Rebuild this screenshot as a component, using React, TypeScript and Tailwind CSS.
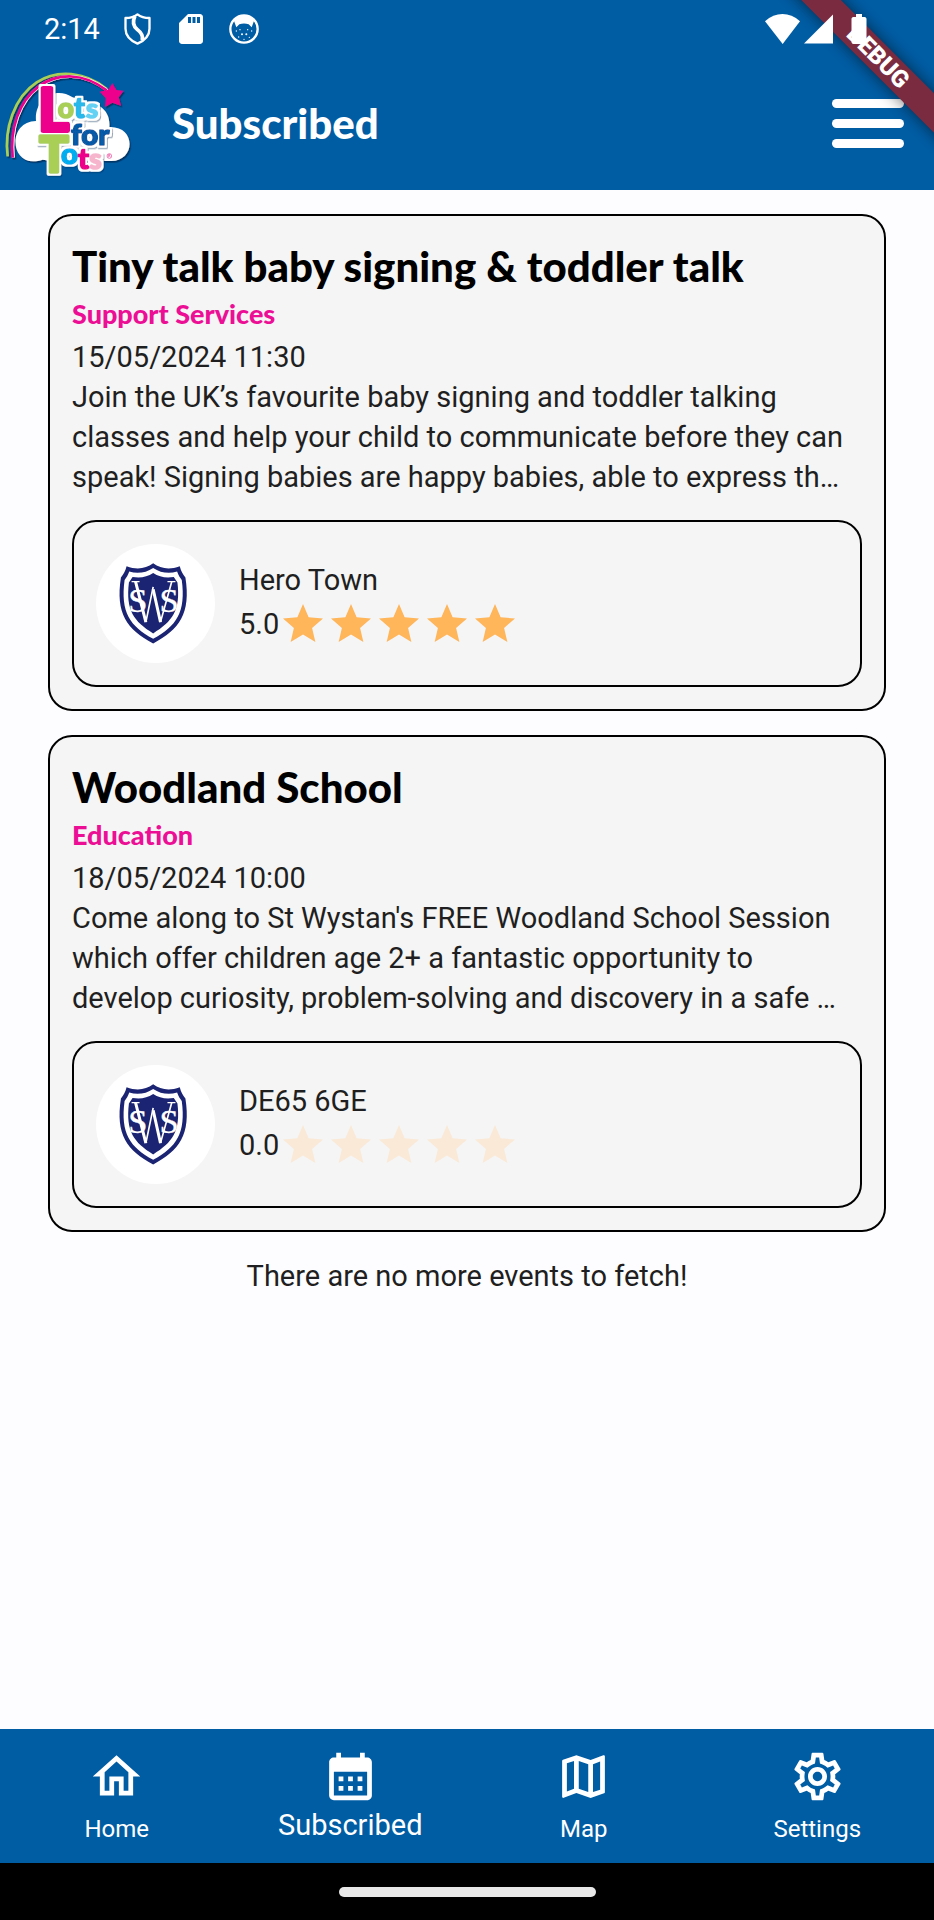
import type { ReactElement } from "react";
import {
  MdBatteryFull,
  MdCalendarMonth,
  MdOutlineHome,
  MdOutlineMap,
  MdOutlineSettings,
  MdSdCard,
  MdStar,
} from "react-icons/md";

type EventItem = {
  title: string;
  category: string;
  date: string;
  description: string;
  place: string;
  rating: number;
};

const events: EventItem[] = [
  {
    title: "Tiny talk baby signing & toddler talk",
    category: "Support Services",
    date: "15/05/2024 11:30",
    description:
      "Join the UK’s favourite baby signing and toddler talking classes and help your child to communicate before they can speak! Signing babies are happy babies, able to express th…",
    place: "Hero Town",
    rating: 5,
  },
  {
    title: "Woodland School",
    category: "Education",
    date: "18/05/2024 10:00",
    description:
      "Come along to St Wystan's FREE Woodland School Session which offer children age 2+ a fantastic opportunity to develop curiosity, problem-solving and discovery in a safe …",
    place: "DE65 6GE",
    rating: 0,
  },
];

function ShieldIcon() {
  return (
    <svg viewBox="0 0 80 96" className="h-8 w-[27px]" fill="none" stroke="#fff" strokeLinejoin="round" aria-hidden="true">
      <path d="M40 4C30 12 18 15 4 15v32c0 20 14 35 36 45 22-10 36-25 36-45V15C62 15 50 12 40 4Z" strokeWidth="7" />
      <path d="M32 10c-8 18-6 30 8 40 14 11 18 20 14 32" strokeWidth="11" />
    </svg>
  );
}

function CatIcon() {
  return (
    <svg viewBox="0 0 90 90" className="size-[30px]" aria-hidden="true">
      <circle cx="45" cy="45" r="41" fill="none" stroke="#fff" strokeWidth="7" />
      <path d="M14 18C30 0 60 0 76 18l-8 22-9-9c-9-3-19-3-28 0l-9 9Z" fill="#fff" />
      <g fill="#fff">
        <circle cx="22" cy="51" r="2" />
        <circle cx="33" cy="47" r="2" />
        <circle cx="56" cy="47" r="2" />
        <circle cx="68" cy="51" r="2" />
        <circle cx="39" cy="61" r="3" />
        <circle cx="52" cy="61" r="3" />
        <circle cx="29" cy="69" r="2" />
        <circle cx="61" cy="70" r="2" />
        <circle cx="45" cy="76" r="2" />
      </g>
    </svg>
  );
}

function BrandLogo() {
  return (
    <svg viewBox="0 0 450 390" className="h-[130px] w-[150px] shrink-0" role="img" aria-label="Lots for Tots">
      <defs>
        <filter id="logo-shadow" x="-10%" y="-10%" width="120%" height="120%">
          <feDropShadow dx="4" dy="5" stdDeviation="2" floodColor="#042a52" floodOpacity="0.75" />
        </filter>
        <filter id="letter-outline" x="-10%" y="-10%" width="120%" height="120%">
          <feMorphology in="SourceAlpha" operator="dilate" radius="6" result="grown" />
          <feFlood floodColor="#fff" />
          <feComposite in2="grown" operator="in" result="edge" />
          <feMerge result="lettering">
            <feMergeNode in="edge" />
            <feMergeNode in="SourceGraphic" />
          </feMerge>
          <feDropShadow in="lettering" dx="3" dy="4" stdDeviation="2" floodColor="#042a52" floodOpacity="0.4" />
        </filter>
      </defs>
      <g fill="none" filter="url(#logo-shadow)">
        <path d="M23 292C12 210 42 115 110 70c62-40 145-32 210 20" stroke="#a9cf57" strokeWidth="8" />
        <path d="M40 296C31 208 58 128 118 82c58-41 134-42 204 12" stroke="#fff" strokeWidth="9" />
        <path d="M38 296C29 208 56 128 116 82c58-41 134-42 204 12" stroke="#ec008c" strokeWidth="8" />
      </g>
      <g fill="#fff" filter="url(#logo-shadow)">
        <path d="M100 307c-72 0-74-119 8-121-6-66 58-106 110-71l80 25c24 16 32 38 30 64 80-3 80 101 5 102-18 0-25-1-35-4l-100 10-70-10c-10 3-19 5-28 5Z" />
      </g>
      <g fontFamily="Lato, sans-serif" fontWeight="900" strokeLinejoin="round" filter="url(#letter-outline)">
        <text x="114" y="217" fontSize="178" fill="#ec008c" stroke="#ec008c" strokeWidth="12">L</text>
        <text x="118" y="338" fontSize="146" fill="#a9cf57" stroke="#a9cf57" strokeWidth="10">T</text>
        <text x="173" y="177" fontSize="84" fill="#a9cf57" stroke="#a9cf57" strokeWidth="5">o</text>
        <text x="222" y="177" fontSize="86" fill="#29b8ea" stroke="#29b8ea" strokeWidth="5">t</text>
        <text x="258" y="177" fontSize="82" fill="#65d2f3" stroke="#65d2f3" strokeWidth="5">s</text>
        <text x="213" y="257" fontSize="88" fill="#075aa7" stroke="#075aa7" strokeWidth="5">for</text>
        <text x="183" y="315" fontSize="88" fill="#00aeef" stroke="#00aeef" strokeWidth="5">o</text>
        <text x="234" y="329" fontSize="88" fill="#ec008c" stroke="#ec008c" strokeWidth="5">t</text>
        <text x="268" y="329" fontSize="84" fill="#f7b5cd" stroke="#f7b5cd" strokeWidth="5">s</text>
      </g>
      <path d="m337 72 12 21 22 2-15 20 7 25-26-9-22 13 2-27-18-19 26-6Z" fill="#ec008c" filter="url(#logo-shadow)" />
      <g fill="none" stroke="#ec4a9c" strokeWidth="2">
        <circle cx="328" cy="291" r="7" />
        <path d="M325 295v-8h5l-2 4 4 4" />
      </g>
    </svg>
  );
}

function SchoolCrest() {
  return (
    <svg viewBox="0 0 358 358" className="size-[119px] shrink-0 rounded-full bg-white" role="img" aria-label="School crest">
      <path d="M172 58c-22 16-48 21-80 9-4 15-9 24-17 34-17 108 18 157 97 198 79-41 114-90 97-198-8-10-13-19-17-34-32 12-58 7-80-9Z" fill="#1b2472" />
      <path d="M172 72c-21 14-46 19-72 11-4 11-8 18-14 25-13 97 16 139 86 177 70-38 99-80 86-177-6-7-10-14-14-25-26 8-51 3-72-11Z" fill="#fff" />
      <path d="M172 87c-18 12-38 16-62 12l-11 17c-10 84 15 117 73 153 58-36 83-69 73-153l-11-17c-24 4-44 0-62-12Z" fill="#1b2472" />
      <g fill="#fff" stroke="#fff" fontFamily="Liberation Serif, serif" strokeWidth="1" textAnchor="middle">
        <text x="126" y="206" fontSize="104">S</text>
        <text x="220" y="206" fontSize="104">S</text>
      </g>
      <g fill="none" stroke="#fff">
        <path d="m119 113 31 122M172 136l22 99" strokeWidth="9" />
        <path d="m150 235 22-106M194 235l34-122" strokeWidth="5" />
        <path d="M107 113h24M215 113h24" strokeWidth="4" />
      </g>
    </svg>
  );
}

function StatusBar() {
  return (
    <div className="flex h-[57px] items-center justify-between pr-[57px] pl-11 text-white">
      <div className="flex items-center">
        <span className="w-20 text-[29px] leading-10">2:14</span>
        <ShieldIcon />
        <MdSdCard className="ml-[22px] size-9" aria-hidden="true" />
        <span className="ml-5">
          <CatIcon />
        </span>
      </div>
      <div className="relative z-20 flex items-center">
        <svg viewBox="0 0 105 90" className="h-[30px] w-[35px]" fill="#fff" aria-hidden="true">
          <path d="M0 22c32-29 73-29 105 0L53 90Z" />
        </svg>
        <svg viewBox="0 0 90 90" className="ml-1 h-[30px] w-[29px]" fill="#fff" aria-hidden="true">
          <path d="M90 0v90H0Z" />
        </svg>
        <MdBatteryFull className="ml-2 size-9" aria-hidden="true" />
      </div>
    </div>
  );
}

function DebugBanner() {
  return (
    <div className="pointer-events-none absolute top-0 right-0 z-10 size-[190px] overflow-hidden">
      <div className="absolute top-[43px] -right-[60px] flex h-7 w-[232px] rotate-45 items-center justify-center bg-[#7a2b40] text-2xl font-black text-white shadow-[0_0_16px_rgba(0,0,0,0.55)]">
        DEBUG
      </div>
    </div>
  );
}

function EventCard({ event }: { event: EventItem }) {
  const starColour = event.rating > 0 ? "text-[#ffb55a]" : "text-[#fae9d7]";
  return (
    <article className="rounded-3xl border-2 border-black bg-[#f5f5f5] p-[22px]">
      <h2 className="font-[Lato] text-[42px] leading-[57px] font-black text-black">{event.title}</h2>
      <p className="mb-1 font-[Lato] text-[27px] leading-[38px] font-black text-[#ec0f96]">{event.category}</p>
      <p>{event.date}</p>
      <p className="pr-2">{event.description}</p>
      <div className="mt-[23px] flex items-center gap-6 rounded-3xl border-2 border-black p-[22px]">
        <SchoolCrest />
        <div>
          <p>{event.place}</p>
          <div className="flex items-center">
            <span>{event.rating.toFixed(1)}</span>
            <span className={`flex ${starColour}`} role="img" aria-label={`${event.rating} out of 5 stars`}>
              {[1, 2, 3, 4, 5].map((n) => (
                <MdStar key={n} className="size-12" />
              ))}
            </span>
          </div>
        </div>
      </div>
    </article>
  );
}

const tabs: { label: string; icon: ReactElement; active?: boolean }[] = [
  { label: "Home", icon: <MdOutlineHome className="size-[57px]" /> },
  { label: "Subscribed", icon: <MdCalendarMonth className="size-[57px]" />, active: true },
  { label: "Map", icon: <MdOutlineMap className="size-[57px]" /> },
  { label: "Settings", icon: <MdOutlineSettings className="size-[57px]" /> },
];

export default function App() {
  return (
    <div className="relative flex min-h-screen flex-col bg-[#fdfdff] font-[Roboto,sans-serif] text-[29px] leading-10 text-[#1f1f21]">
      <header className="bg-[#005da4]">
        <StatusBar />
        <div className="flex h-[133px] items-center pr-[30px]">
          <BrandLogo />
          <h1 className="ml-[22px] flex-1 font-[Lato] text-[42px] leading-[57px] font-black text-white">Subscribed</h1>
          <button type="button" aria-label="Open menu" className="flex w-[72px] flex-col gap-[11px]">
            <span className="h-[9px] w-full rounded-full bg-white" />
            <span className="h-[9px] w-full rounded-full bg-white" />
            <span className="h-[9px] w-full rounded-full bg-white" />
          </button>
        </div>
      </header>
      <DebugBanner />

      <main className="flex flex-1 flex-col gap-6 px-12 pt-6">
        {events.map((event) => (
          <EventCard key={event.title} event={event} />
        ))}
        <p className="text-center">There are no more events to fetch!</p>
      </main>

      <nav className="grid h-[134px] grid-cols-4 bg-[#005da4] text-white">
        {tabs.map((tab) => (
          <a
            key={tab.label}
            href={`#${tab.label.toLowerCase()}`}
            aria-current={tab.active ? "page" : undefined}
            className="flex flex-col items-center gap-1 pt-[19px]"
          >
            {tab.icon}
            <span className={tab.active ? "text-[29px] leading-8" : "text-2xl leading-10"}>{tab.label}</span>
          </a>
        ))}
      </nav>
      <div className="flex h-[57px] items-center justify-center bg-black">
        <div className="h-[10px] w-[257px] rounded-full bg-[#e8e8e8]" />
      </div>
    </div>
  );
}
